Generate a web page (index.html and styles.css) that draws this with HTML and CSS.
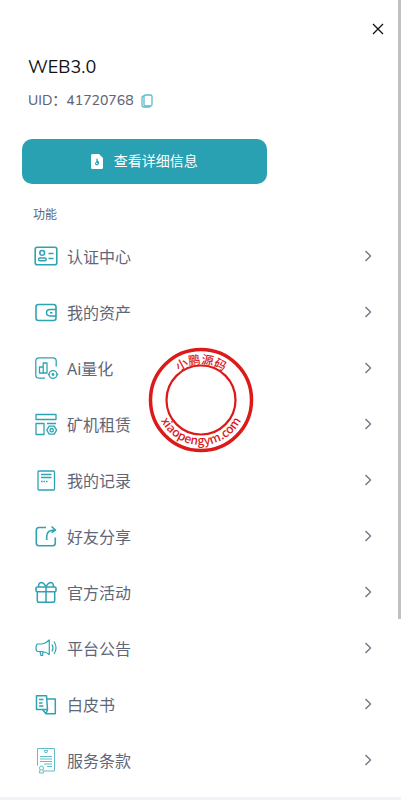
FILE: index.html
```html
<!DOCTYPE html>
<html lang="zh-CN">
<head>
<meta charset="UTF-8">
<meta name="viewport" content="width=device-width, initial-scale=1.0">
<title>WEB3.0</title>
<link rel="stylesheet" href="styles.css">
</head>
<body>
<div class="drawer">
    <div class="top">
        <button class="close" type="button" aria-label="关闭">
            <svg width="12" height="12" viewBox="0 0 12 12"><path d="M1 1L11 11M11 1L1 11"/></svg>
        </button>
    </div>

    <div class="user">
        <h1>WEB3.0</h1>
        <div class="uid">
            <span>UID：41720768</span>
            <button class="copy" type="button" aria-label="复制">
                <svg width="12" height="14" viewBox="0 0 12 14">
                    <rect x="3" y="1" width="8" height="11" rx="1.500"/>
                    <path d="M3 2Q1 2 1 4V11Q1 13 3 13H8Q9.500 13 9.500 12"/>
                </svg>
            </button>
        </div>
    </div>

    <button class="detail" type="button">
        <svg width="12" height="15" viewBox="0 0 12 15">
            <path fill="#fff" d="M1.500 0H8L12 4V13.500Q12 15 10.500 15H1.500Q0 15 0 13.500V1.500Q0 0 1.500 0Z"/>
            <path fill="#2aa1b3" d="M5.500 4.500H6.500L6.800 7L8 7.500V9.500Q7.500 11.500 5.500 11.500Q4 11 4 9.500Q4 8.200 5.200 8Z"/>
            <circle cx="5.700" cy="9.500" r=".8" fill="#fff"/>
        </svg>
        <span>查看详细信息</span>
    </button>

    <h2>功能</h2>

    <nav class="menu">
        <a href="#">
            <svg class="icon" viewBox="0 0 24 24">
                <rect x="1.200" y="3.200" width="21.600" height="17.600" rx="2" stroke-width="1.600"/>
                <circle cx="8.200" cy="8.900" r="2.400" stroke-width="1.600"/>
                <rect x="4.600" y="14" width="7.600" height="2.800" rx="1.400" stroke-width="1.500"/>
                <path d="M14.500 9.500H19.500M14.500 14.500H19.500" stroke-width="1.600"/>
            </svg>
            <span>认证中心</span>
            <svg class="arrow" viewBox="0 0 8 12"><path d="M1.500 1L6.500 6L1.500 11"/></svg>
        </a>
        <a href="#">
            <svg class="icon" viewBox="0 0 24 24">
                <rect x="2" y="4.500" width="20" height="16" rx="2.500" stroke-width="1.600"/>
                <path d="M22 9.500H16Q12.500 9.700 12.500 12.700Q12.500 15.700 16 15.900H22M16 12.700H18.500" stroke-width="1.500"/>
            </svg>
            <span>我的资产</span>
            <svg class="arrow" viewBox="0 0 8 12"><path d="M1.500 1L6.500 6L1.500 11"/></svg>
        </a>
        <a href="#">
            <svg class="icon" viewBox="0 0 24 24">
                <path d="M1.800 16V5Q1.800 1.800 5 1.800H19Q22.200 1.800 22.200 5V10.500M1.800 16V19Q1.800 22.200 5 22.200H11M5.500 17V11H9.200V17ZM9.200 17V7H13V17Z"/>
                <circle cx="19" cy="18.500" r="3.900"/>
                <circle cx="19" cy="18.500" r=".8"/>
                <path d="M13.800 18.500H15M23 18.500H24.200"/>
            </svg>
            <span>Ai量化</span>
            <svg class="arrow" viewBox="0 0 8 12"><path d="M1.500 1L6.500 6L1.500 11"/></svg>
        </a>
        <a href="#">
            <svg class="icon" viewBox="0 0 24 24">
                <path d="M2 2.500H22V7.500H2ZM2 11.500H10V22.500H2ZM13 11.500H22"/>
                <path d="M15.200 14.200H20.200L22.600 18.200L20.200 22.200H15.200L12.800 18.200Z"/>
                <circle cx="17.700" cy="18.200" r="1.700"/>
            </svg>
            <span>矿机租赁</span>
            <svg class="arrow" viewBox="0 0 8 12"><path d="M1.500 1L6.500 6L1.500 11"/></svg>
        </a>
        <a href="#">
            <svg class="icon" viewBox="0 0 24 24">
                <rect x="4" y="3" width="16.500" height="19" rx="1"/>
                <path d="M7 6.500H17.500M7 9.500H17.500"/>
                <path d="M7 13.500H13.500" stroke-dasharray="1.600 .9"/>
            </svg>
            <span>我的记录</span>
            <svg class="arrow" viewBox="0 0 8 12"><path d="M1.500 1L6.500 6L1.500 11"/></svg>
        </a>
        <a href="#">
            <svg class="icon" viewBox="0 0 24 24">
                <path d="M12 3.500H5Q2.300 3.500 2.300 6.200V19Q2.300 21.800 5 21.800H18.500Q21.300 21.800 21.300 19V13.500M12.700 16V12.500Q12.700 6 20.500 6M17.500 2.500L21.500 6L17.500 8.500" stroke-width="1.600"/>
            </svg>
            <span>好友分享</span>
            <svg class="arrow" viewBox="0 0 8 12"><path d="M1.500 1L6.500 6L1.500 11"/></svg>
        </a>
        <a href="#">
            <svg class="icon" viewBox="0 0 24 24">
                <rect x="2" y="7" width="20" height="4.800" rx="1.300" stroke-width="1.600"/>
                <path d="M3.300 12V20.500Q3.300 22.300 5.200 22.300H18.800Q20.700 22.300 20.700 20.500V12M12 7V22M12 7Q10 2.500 7 2.500Q4.500 2.700 4.500 7M12 7Q14 2.500 17 2.500Q19.500 2.700 19.500 7" stroke-width="1.500"/>
            </svg>
            <span>官方活动</span>
            <svg class="arrow" viewBox="0 0 8 12"><path d="M1.500 1L6.500 6L1.500 11"/></svg>
        </a>
        <a href="#">
            <svg class="icon" viewBox="0 0 24 24">
                <path d="M5 8H8Q12 7.500 15.300 4V18.500Q12 15.700 8 15.500H5M5 8H3.500Q2 8.500 2 11.700Q2 15 3.500 15.500H5M6 15.500L7 19.500H8.700V15.500M18 8.500Q20 12 18 15.500M20 5.500Q24 11.500 20 18" stroke-width="1.200"/>
            </svg>
            <span>平台公告</span>
            <svg class="arrow" viewBox="0 0 8 12"><path d="M1.500 1L6.500 6L1.500 11"/></svg>
        </a>
        <a href="#">
            <svg class="icon" viewBox="0 0 24 24">
                <path d="M2.500 3.800H12.500L13.500 17.500H2.500ZM5 7.500H9.500M5 11H8.500M5 14H9.500M8.500 17.500L12 21.800H21.300V7H12.800M13.500 17.500L12 21.800" stroke-width="1.500"/>
            </svg>
            <span>白皮书</span>
            <svg class="arrow" viewBox="0 0 8 12"><path d="M1.500 1L6.500 6L1.500 11"/></svg>
        </a>
        <a href="#">
            <svg class="icon pale" viewBox="0 0 24 24">
                <path d="M3.500 17.500V0.500H20.500V23H10"/>
                <path d="M10.500 2.500H13.500L13 4.500H11ZM6 8.500H18M6 11H18M6 13.500H18M10 16H18M13 18.500H18"/>
                <circle cx="7.500" cy="20" r="2"/>
                <path d="M6 21.500L5.500 25H9.500L9 21.500"/>
            </svg>
            <span>服务条款</span>
            <svg class="arrow" viewBox="0 0 8 12"><path d="M1.500 1L6.500 6L1.500 11"/></svg>
        </a>
    </nav>

    <div class="scroll-thumb"></div>

    <!-- stamp over the menu -->
    <svg class="stamp" width="106" height="106" viewBox="0 0 106 106">
        <defs>
            <path id="arcTop" d="M17 53A36 36 0 0 1 89 53"/>
            <path id="arcBottom" d="M8 53A45 45 0 0 0 98 53"/>
        </defs>
        <circle cx="53" cy="53" r="50.500" stroke-width="3.500"/>
        <circle cx="53" cy="53" r="34.500" stroke-width="2.200"/>
        <text><textPath href="#arcTop" startOffset="50%">小鹏源码</textPath></text>
        <text><textPath href="#arcBottom" startOffset="50%">xiaopengym.com</textPath></text>
    </svg>
</div>
</body>
</html>
```
FILE: styles.css
```css
* {
    box-sizing: border-box;
}

body {
    margin: 0;
    background: #f0f3f7;
    font-family: Nunito, Lato, 'Noto Sans CJK SC', sans-serif;
    color: #5f6678;
}

button {
    border: 0;
    padding: 0;
    background: none;
    font-family: inherit;
    cursor: pointer;
}

svg {
    display: block;
    fill: none;
    overflow: visible;
}

.drawer {
    position: relative;
    padding-bottom: 9px;
    background: #fff;
}

.top {
    display: flex;
    justify-content: flex-end;
    padding: 20px 14px 0 0;
}

.close {
    display: flex;
    align-items: center;
    justify-content: center;
    width: 18px;
    height: 18px;
}

.close svg {
    stroke: #111;
    stroke-width: 1.3;
}

.user {
    padding: 17px 28px 0;
}

h1 {
    margin: 0;
    font-size: 18px;
    font-weight: 400;
    line-height: 24px;
    color: #111;
}

.uid {
    display: flex;
    align-items: center;
    gap: 7px;
    margin-top: 12px;
    font-size: 14px;
    font-weight: 500;
    line-height: 20px;
}

.copy svg {
    stroke: #5bbcc9;
    stroke-width: 1.3;
}

.detail {
    display: flex;
    align-items: center;
    justify-content: center;
    gap: 11px;
    width: 61%;
    height: 45px;
    margin: 28px 0 0 22px;
    border-radius: 10px;
    background: #2aa1b3;
    color: #fff;
    font-size: 14px;
    line-height: 20px;
}

h2 {
    margin: 21px 0 3px 33px;
    font-size: 12px;
    font-weight: 400;
    line-height: 20px;
}

.menu a {
    display: flex;
    align-items: center;
    height: 56px;
    padding: 0 29px 0 34px;
    color: inherit;
    font-family: 'Noto Sans', 'Noto Sans CJK SC', sans-serif;
    font-size: 16px;
    text-decoration: none;
}

.menu span {
    flex: 1;
    padding-left: 9px;
}

.icon {
    width: 24px;
    height: 24px;
    stroke: #2fa3b4;
    stroke-width: 1.3;
    stroke-linejoin: round;
}

.pale {
    stroke: #62bdc9;
    stroke-width: 1;
}

.arrow {
    width: 8px;
    height: 12px;
    stroke: #6b7182;
    stroke-width: 1.3;
}

.scroll-thumb {
    position: absolute;
    top: 0;
    right: 0;
    width: 3px;
    height: 619px;
    background: #c1c1c1;
}

.stamp {
    position: absolute;
    top: 347px;
    left: 50%;
    transform: translateX(-50%);
    stroke: #dc1a1a;
    pointer-events: none;
}

.stamp text {
    fill: #dc1a1a;
    stroke: none;
    font-family: 'Noto Sans CJK SC', sans-serif;
    font-size: 12px;
    font-weight: 500;
    text-anchor: middle;
}
```
